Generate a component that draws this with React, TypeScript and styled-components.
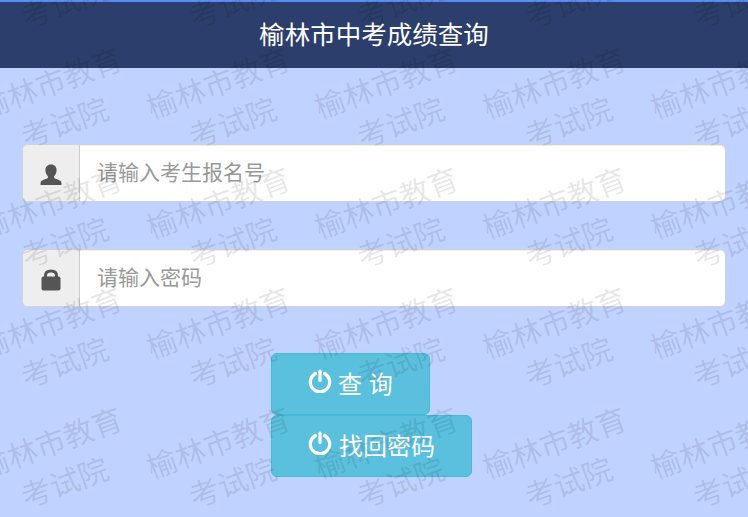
import styled, { createGlobalStyle } from "styled-components";

const GlobalStyle = createGlobalStyle`
    html, body {
        margin: 0;
        padding: 0;
        height: 100%;
        background: #c0d2ff;
    }
    #root {
        height: 100%;
    }
    * {
        box-sizing: border-box;
    }
`;

const Page = styled.div`
    position: relative;
    height: 517px;
    overflow: hidden;
    font-family: "Liberation Sans", "Noto Sans CJK SC", sans-serif;
`;

const Header = styled.header`
    height: 68px;
    border-top: 2px solid #5b8cf5;
    background: #2c3e6b;
    color: #fff;
    font-size: 25.5px;
    line-height: 67px;
    text-align: center;
`;

const Form = styled.form`
    padding: 76px 22px 0 22px;
    display: flex;
    flex-direction: column;
    gap: 47px;
`;

const InputGroup = styled.div`
    display: flex;
    height: 58px;
    border: 1px solid #d2d2d2;
    border-radius: 6px;
    overflow: hidden;
    background: #fff;
    box-shadow: inset 0 1px 1px rgba(0, 0, 0, 0.075);
`;

const Addon = styled.span`
    width: 57px;
    flex: none;
    display: flex;
    align-items: center;
    justify-content: center;
    padding: 3px 1px 0 0;
    background: #eee;
    border-right: 1px solid #ccc;
    color: #555;
`;

const Input = styled.input`
    flex: 1;
    min-width: 0;
    border: 0;
    outline: 0;
    padding: 0 17px;
    background: transparent;
    font-family: inherit;
    font-size: 21px;
    color: #555;

    &::placeholder {
        color: #999;
        opacity: 1;
    }
`;

const Buttons = styled.div`
    margin-top: 46px;
    margin-left: 271px;
    display: flex;
    flex-direction: column;
    align-items: flex-start;
`;

const Button = styled.button<{ $gap: number }>`
    height: 62px;
    padding: 0 36px 4px 36px;
    display: flex;
    align-items: center;
    gap: ${(props) => props.$gap}px;
    border: 1px solid #46b8da;
    border-radius: 6px;
    background: #5bc0de;
    color: #fff;
    font-family: inherit;
    font-size: 24px;
    white-space: pre;

    svg {
        margin-bottom: 2px;
    }
`;

// watermark tiles, lies over the whole page
const Watermark = styled.div`
    position: absolute;
    top: -76px;
    left: -26px;
    display: grid;
    grid-template-columns: repeat(6, 168px);
    grid-auto-rows: 120px;
    pointer-events: none;
`;

const Tile = styled.div`
    display: flex;
    flex-direction: column;
    align-items: center;
    justify-content: center;
    font-size: 30px;
    line-height: 42px;
    color: rgba(0, 0, 0, 0.105);
    white-space: nowrap;
    transform: rotate(-20deg);
`;

const UserIcon = () => (
    <svg width="22" height="22" viewBox="0 0 22 22" fill="#555">
        <path d="M11 0.500c-3.700 0-5.600 2.500-5.600 5.800 0 2.500 1 4.500 2.500 5.900v1.500c-1 1.300-6.200 1.900-7.100 4.100-.3.800-.3 2.100-.3 3.200h21c0-1.100 0-2.400-.3-3.200-.9-2.200-6.100-2.800-7.100-4.100v-1.500c1.500-1.400 2.500-3.400 2.500-5.900 0-3.300-1.900-5.800-5.600-5.800z" />
    </svg>
);

const LockIcon = () => (
    <svg width="20" height="22" viewBox="0 0 20 22" fill="#555">
        <path d="M4.500 8V6.500C4.500 3 6.500 2 10 2s5.500 1 5.500 4.500V8" fill="none" stroke="#555" strokeWidth="3" />
        <rect x="0.500" y="7.500" width="19" height="14" rx="2" />
    </svg>
);

const PowerIcon = () => (
    <svg width="24" height="24" viewBox="0 0 24 24" fill="none" stroke="#fff" strokeWidth="3.200" strokeLinecap="round">
        <path d="M7.500 4.500a9.700 9.700 0 1 0 9 0" />
        <path d="M12 2v9.500" />
    </svg>
);

const tiles = Array.from({ length: 36 });

function App() {
    return (
        <Page>
            <GlobalStyle />
            <Header>榆林市中考成绩查询</Header>
            <Form>
                <InputGroup>
                    <Addon><UserIcon /></Addon>
                    <Input placeholder="请输入考生报名号" />
                </InputGroup>
                <InputGroup>
                    <Addon><LockIcon /></Addon>
                    <Input placeholder="请输入密码" />
                </InputGroup>
            </Form>
            <Buttons>
                <Button type="button" $gap={6}><PowerIcon />查 询</Button>
                <Button type="button" $gap={7}><PowerIcon />找回密码</Button>
            </Buttons>
            <Watermark>
                {tiles.map((_, i) => (
                    <Tile key={i}>
                        <span>榆林市教育</span>
                        <span>考试院</span>
                    </Tile>
                ))}
            </Watermark>
        </Page>
    );
}

export default App;
